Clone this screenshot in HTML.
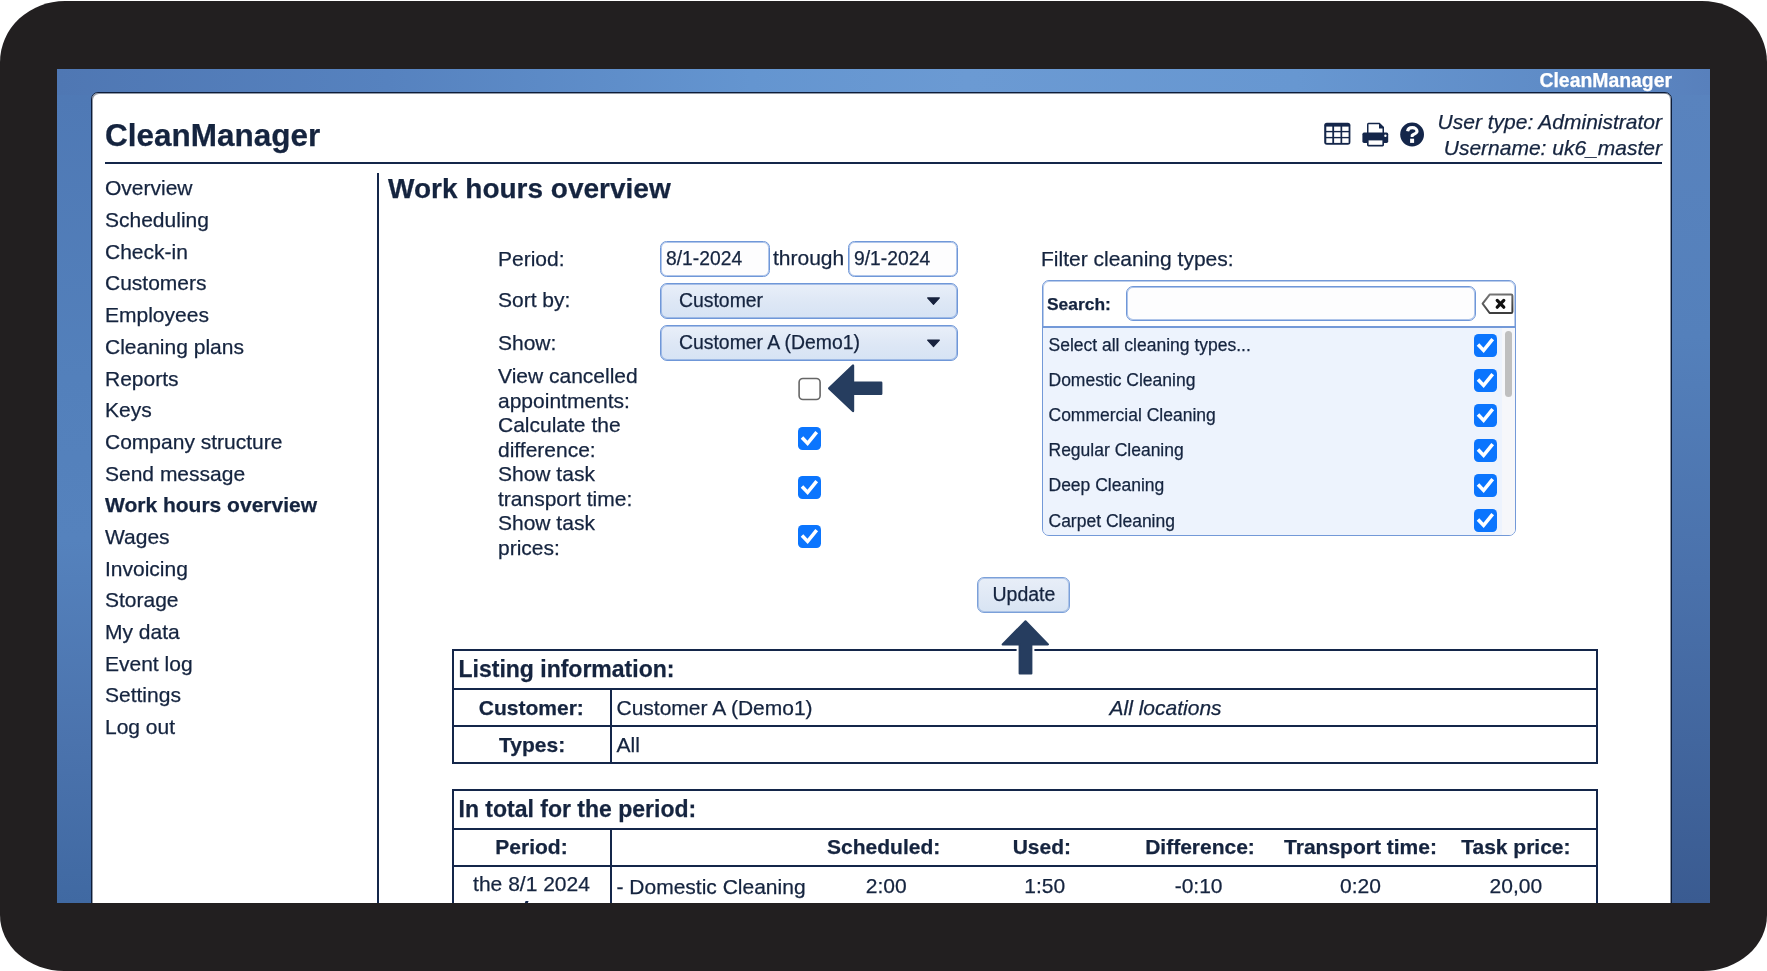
<!DOCTYPE html>
<html><head><meta charset="utf-8">
<style>
html,body{margin:0;padding:0;background:#fff;width:1767px;height:971px;overflow:hidden;position:relative}
*{box-sizing:border-box}
body{font-family:"Liberation Sans",sans-serif;color:#15243f;-webkit-text-stroke-width:0.25px}
.frame{position:absolute;left:0;top:1px;width:1767px;height:969.5px;background:#221f20;border-radius:65px 65px 64px 64px / 61px 61px 56px 56px}
.clip{position:absolute;left:0;top:0;width:1767px;height:903px;overflow:hidden;will-change:transform}
.blue{position:absolute;left:57px;top:69px;width:1653px;height:834px;
 background:radial-gradient(ellipse 820px 260px at 1000px 10px,rgba(108,156,214,1) 0%,rgba(108,156,214,0.6) 50%,rgba(108,156,214,0) 100%),linear-gradient(180deg,#507ab6 0%,#5580bc 45%,#4d74ae 75%,#43669f 100%)}
.t{position:absolute;white-space:nowrap;line-height:1}
.panel{position:absolute;left:91px;top:92px;width:1581px;height:900px;background:#fff;
 border:1px solid #0d1c38;border-radius:7px 7px 0 0;box-shadow:inset 1px 1px 0 rgba(13,28,56,0.45),inset -1px 0 0 rgba(13,28,56,0.45)}
.a{position:absolute}
.b{font-weight:bold}
.i{font-style:italic}
.menu{position:absolute;left:105px;top:172.4px;font-size:21px;line-height:31.68px}
.menu div{white-space:nowrap}
.lbl{position:absolute;left:498px;font-size:21px;line-height:24.5px;white-space:nowrap}

.inp{position:absolute;border:1px solid #6f97d8;border-radius:6.5px;background:#fdfdfe;box-shadow:inset 0 0 0 1px rgba(111,151,216,0.55)}
.sel{position:absolute;border:1px solid #6f97d8;border-radius:7px;box-shadow:inset 0 0 0 1px rgba(111,151,216,0.55);background:linear-gradient(180deg,#e9eff9 0%,#dde7f5 55%,#d6e3f4 100%)}
.dd{position:absolute;width:0;height:0;border-left:6.5px solid transparent;border-right:6.5px solid transparent;border-top:7.6px solid #1c2b45}
.cb{position:absolute;width:23px;height:23px;border-radius:4.5px;background:#0b75fe}
.cb svg{position:absolute;left:0;top:0}
.cbu{position:absolute;width:22.5px;height:22.5px;border-radius:4.5px;background:#fff;border:1.7px solid #666}
.tbl{position:absolute;border:2px solid #14264a}
.hl{position:absolute;height:2px;background:#14264a}
.vl{position:absolute;width:2px;background:#14264a}
</style></head>
<body>
<div class="frame"></div>
<div class="clip">
  <div class="blue"></div>
  <div class="a" style="left:57px;top:69px;width:1653px;height:26px;background:linear-gradient(90deg,#4f77b3 0%,#5682bf 20%,#6495d0 42%,#6b9ad3 55%,#6797d1 75%,#5f8cc7 90%,#5880bc 100%)"></div>
  <div class="a" style="left:57px;top:95px;width:36px;height:808px;background:linear-gradient(180deg,#4f79b5 0%,#5380bb 35%,#5582bd 55%,#4b73ad 80%,#4069a2 100%)"></div>
  <div class="a" style="left:1668px;top:95px;width:42px;height:808px;background:linear-gradient(180deg,#5983be 0%,#5480bb 30%,#4a71ab 60%,#3a5b91 100%)"></div>
  <div class="t b" style="right:95px;top:70.5px;font-size:19.4px;color:#fff">CleanManager</div>
  <div class="panel"></div>

  <!-- header -->
  <div class="t b" style="left:105px;top:120px;font-size:31.5px">CleanManager</div>
  <div class="t i" style="right:105px;top:111.4px;font-size:21px">User type: Administrator</div>
  <div class="t i" style="right:105px;top:136.8px;font-size:21px">Username: uk6_master</div>
  <div class="a" style="left:105px;top:162px;width:1557px;height:2px;background:#14264a"></div>

  <!-- menu -->
  <div class="menu">
    <div>Overview</div><div>Scheduling</div><div>Check-in</div><div>Customers</div><div>Employees</div>
    <div>Cleaning plans</div><div>Reports</div><div>Keys</div><div>Company structure</div><div>Send message</div>
    <div class="b">Work hours overview</div><div>Wages</div><div>Invoicing</div><div>Storage</div><div>My data</div>
    <div>Event log</div><div>Settings</div><div>Log out</div>
  </div>
  <div class="a" style="left:377px;top:173px;width:2px;height:800px;background:#14264a"></div>

  <div class="t b" style="left:388px;top:175px;font-size:28px">Work hours overview</div>

  <!-- form labels -->
  <div class="t" style="left:498px;top:248px;font-size:21px">Period:</div>
  <div class="t" style="left:498px;top:289.2px;font-size:21px">Sort by:</div>
  <div class="t" style="left:498px;top:331.7px;font-size:21px">Show:</div>
  <div class="lbl" style="top:364px">View cancelled<br>appointments:</div>
  <div class="lbl" style="top:413px">Calculate the<br>difference:</div>
  <div class="lbl" style="top:462px">Show task<br>transport time:</div>
  <div class="lbl" style="top:511px">Show task<br>prices:</div>

  <div class="t" style="left:1041px;top:248.3px;font-size:21px">Filter cleaning types:</div>

  <!-- inputs -->
  <div class="inp" style="left:660px;top:241px;width:110px;height:35.5px"></div>
  <div class="t" style="left:666px;top:248.6px;font-size:19.3px">8/1-2024</div>
  <div class="t" style="left:773px;top:246.6px;font-size:21px">through</div>
  <div class="inp" style="left:848px;top:241px;width:110px;height:35.5px"></div>
  <div class="t" style="left:854px;top:248.6px;font-size:19.3px">9/1-2024</div>
  <div class="sel" style="left:660px;top:283px;width:298px;height:36px"></div>
  <div class="t" style="left:679px;top:290.5px;font-size:19.4px">Customer</div>
  <svg class="a" style="left:922px;top:292px" width="24" height="18" viewBox="922 292 24 18"><path d="M927.6 297.9 L939.4 297.9 L933.5 304.4 Z" fill="#17223d" stroke="#17223d" stroke-width="1.1" stroke-linejoin="round"/></svg>
  <div class="sel" style="left:660px;top:325.4px;width:298px;height:36px"></div>
  <div class="t" style="left:679px;top:332.6px;font-size:19.4px">Customer A (Demo1)</div>
  <svg class="a" style="left:922px;top:334px" width="24" height="18" viewBox="922 334 24 18"><path d="M927.6 340.1 L939.4 340.1 L933.5 346.6 Z" fill="#17223d" stroke="#17223d" stroke-width="1.1" stroke-linejoin="round"/></svg>

  <!-- checkboxes -->
  <svg class="a" style="left:796px;top:376px" width="27" height="27" viewBox="796 376 27 27"><rect x="799.1" y="378.5" width="21" height="21" rx="3.8" fill="#fff" stroke="#666" stroke-width="1.6"/></svg>
  <div class="cb" style="left:798px;top:427px"><svg width="23" height="23" viewBox="0 0 23 23"><path d="M5.2 11.8 L9.6 16.4 L17.6 6.4" fill="none" stroke="#fff" stroke-width="3.5" stroke-linecap="square" stroke-linejoin="miter"/></svg></div>
  <div class="cb" style="left:798px;top:476px"><svg width="23" height="23" viewBox="0 0 23 23"><path d="M5.2 11.8 L9.6 16.4 L17.6 6.4" fill="none" stroke="#fff" stroke-width="3.5" stroke-linecap="square" stroke-linejoin="miter"/></svg></div>
  <div class="cb" style="left:798px;top:525px"><svg width="23" height="23" viewBox="0 0 23 23"><path d="M5.2 11.8 L9.6 16.4 L17.6 6.4" fill="none" stroke="#fff" stroke-width="3.5" stroke-linecap="square" stroke-linejoin="miter"/></svg></div>


  <!-- filter box -->
  <div class="a" style="left:1042.3px;top:280px;width:474px;height:256px;border:1px solid #7399d8;border-radius:7px;background:#fff;overflow:hidden;box-shadow:inset 0 0 0 1px rgba(115,153,216,0.5)">
    <div class="a" style="left:0;top:45px;width:100%;height:1.5px;background:#7399d8"></div>
    <div class="a" style="left:0;top:46.5px;width:100%;height:220px;background:#edf3fd"></div>
    <div class="a" style="left:459px;top:46.5px;width:15px;height:220px;background:#f6f7fa"></div>
    <div class="a" style="left:461.7px;top:49.5px;width:7px;height:66.5px;border-radius:3.5px;background:#bfbfbf"></div>
  </div>
  <div class="t b" style="left:1047px;top:295.6px;font-size:17.4px">Search:</div>
  <div class="inp" style="left:1125.5px;top:285.8px;width:350.5px;height:35.7px;border-radius:7px"></div>
  <svg class="a" style="left:1478px;top:289px" width="40" height="28" viewBox="1478 289 40 28">
    <defs><linearGradient id="tg" x1="0" y1="0" x2="0.3" y2="1"><stop offset="0" stop-color="#7a7a7a"/><stop offset="1" stop-color="#3e3e3e"/></linearGradient></defs>
    <path d="M1482.6 303.6 L1489.6 294.6 L1511.2 294.6 Q1512.4 294.6 1512.4 295.8 L1512.4 311.8 Q1512.4 313 1511.2 313 L1489.6 313 Z" fill="#fff" stroke="url(#tg)" stroke-width="2" stroke-linejoin="round"/>
    <path d="M1497.2 300.4 L1503.8 307.2 M1503.8 300.4 L1497.2 307.2" stroke="#111" stroke-width="3.2" stroke-linecap="round"/>
  </svg>
  <div class="t" style="left:1048.5px;top:337.0px;font-size:17.5px">Select all cleaning types...</div>
  <div class="cb" style="left:1474px;top:333.8px"><svg width="23" height="23" viewBox="0 0 23 23"><path d="M5.2 11.8 L9.6 16.4 L17.6 6.4" fill="none" stroke="#fff" stroke-width="3.5" stroke-linecap="square" stroke-linejoin="miter"/></svg></div>
  <div class="t" style="left:1048.5px;top:372.1px;font-size:17.5px">Domestic Cleaning</div>
  <div class="cb" style="left:1474px;top:368.9px"><svg width="23" height="23" viewBox="0 0 23 23"><path d="M5.2 11.8 L9.6 16.4 L17.6 6.4" fill="none" stroke="#fff" stroke-width="3.5" stroke-linecap="square" stroke-linejoin="miter"/></svg></div>
  <div class="t" style="left:1048.5px;top:407.2px;font-size:17.5px">Commercial Cleaning</div>
  <div class="cb" style="left:1474px;top:404.0px"><svg width="23" height="23" viewBox="0 0 23 23"><path d="M5.2 11.8 L9.6 16.4 L17.6 6.4" fill="none" stroke="#fff" stroke-width="3.5" stroke-linecap="square" stroke-linejoin="miter"/></svg></div>
  <div class="t" style="left:1048.5px;top:442.3px;font-size:17.5px">Regular Cleaning</div>
  <div class="cb" style="left:1474px;top:439.1px"><svg width="23" height="23" viewBox="0 0 23 23"><path d="M5.2 11.8 L9.6 16.4 L17.6 6.4" fill="none" stroke="#fff" stroke-width="3.5" stroke-linecap="square" stroke-linejoin="miter"/></svg></div>
  <div class="t" style="left:1048.5px;top:477.4px;font-size:17.5px">Deep Cleaning</div>
  <div class="cb" style="left:1474px;top:474.2px"><svg width="23" height="23" viewBox="0 0 23 23"><path d="M5.2 11.8 L9.6 16.4 L17.6 6.4" fill="none" stroke="#fff" stroke-width="3.5" stroke-linecap="square" stroke-linejoin="miter"/></svg></div>
  <div class="t" style="left:1048.5px;top:512.5px;font-size:17.5px">Carpet Cleaning</div>
  <div class="cb" style="left:1474px;top:509.3px"><svg width="23" height="23" viewBox="0 0 23 23"><path d="M5.2 11.8 L9.6 16.4 L17.6 6.4" fill="none" stroke="#fff" stroke-width="3.5" stroke-linecap="square" stroke-linejoin="miter"/></svg></div>

  <!-- update button -->
  <div class="a" style="left:977px;top:577px;width:93px;height:36.3px;border:1px solid #7ba0d9;border-radius:7px;background:linear-gradient(180deg,#e8eef8,#d8e4f3);box-shadow:inset 0 0 0 1px rgba(123,160,217,0.5)"></div>
  <div class="t" style="left:992.5px;top:585.4px;font-size:19.5px">Update</div>

  <!-- listing table -->
  <div class="tbl" style="left:452px;top:649px;width:1146px;height:115px"></div>
  <div class="hl" style="left:452px;top:688px;width:1146px"></div>
  <div class="hl" style="left:452px;top:725px;width:1146px"></div>
  <div class="vl" style="left:609.8px;top:688px;height:76px"></div>
  <div class="t b" style="left:458.5px;top:658.3px;font-size:23px">Listing information:</div>
  <div class="t b" style="left:478.8px;top:696.5px;font-size:21px">Customer:</div>
  <div class="t" style="left:616.5px;top:696.5px;font-size:21px">Customer A (Demo1)</div>
  <div class="t i" style="left:1109.5px;top:696.5px;font-size:21px">All locations</div>
  <div class="t b" style="left:499px;top:733.5px;font-size:21px">Types:</div>
  <div class="t" style="left:616.5px;top:733.5px;font-size:21px">All</div>

  <!-- up arrow -->
  <svg class="a" style="left:995px;top:614px" width="62" height="66" viewBox="995 614 62 66">
    <path d="M1025.5 621.2 L1048 644.4 L1031.4 644.4 L1031.4 673.6 L1019.6 673.6 L1019.6 644.4 L1002.6 644.4 Z" fill="#263d5f" stroke="#fff" stroke-width="6" stroke-linejoin="round"/>
    <path d="M1025.5 621.2 L1048 644.4 L1031.4 644.4 L1031.4 673.6 L1019.6 673.6 L1019.6 644.4 L1002.6 644.4 Z" fill="#263d5f" stroke="#263d5f" stroke-width="2" stroke-linejoin="round"/>
  </svg>

  <!-- totals table -->
  <div class="tbl" style="left:452px;top:789px;width:1146px;height:200px"></div>
  <div class="hl" style="left:452px;top:828px;width:1146px"></div>
  <div class="hl" style="left:452px;top:864.5px;width:1146px"></div>
  <div class="vl" style="left:609.8px;top:828px;height:100px"></div>
  <div class="t b" style="left:458.5px;top:797.7px;font-size:23px">In total for the period:</div>
  <div class="t b" style="left:452px;width:159px;text-align:center;top:836px;font-size:21px">Period:</div>
  <div class="t b" style="left:783.7px;width:200px;text-align:center;top:835.6px;font-size:21px">Scheduled:</div>
  <div class="t b" style="left:941.9px;width:200px;text-align:center;top:835.6px;font-size:21px">Used:</div>
  <div class="t b" style="left:1100px;width:200px;text-align:center;top:835.6px;font-size:21px">Difference:</div>
  <div class="t b" style="left:1260.5px;width:200px;text-align:center;top:835.6px;font-size:21px">Transport time:</div>
  <div class="t b" style="left:1415.9px;width:200px;text-align:center;top:835.6px;font-size:21px">Task price:</div>
  <div class="t" style="left:452px;width:159px;text-align:center;top:873px;font-size:21px">the 8/1 2024</div>
  <div class="a" style="left:524.5px;top:900.5px;width:3px;height:3px;background:#14264a;transform:skewX(-20deg)"></div>
  <div class="t" style="left:616.5px;top:875.7px;font-size:21px">- Domestic Cleaning</div>
  <div class="t" style="left:786.3px;width:200px;text-align:center;top:875.2px;font-size:21px">2:00</div>
  <div class="t" style="left:944.8px;width:200px;text-align:center;top:875.2px;font-size:21px">1:50</div>
  <div class="t" style="left:1098.6px;width:200px;text-align:center;top:875.2px;font-size:21px">-0:10</div>
  <div class="t" style="left:1260.5px;width:200px;text-align:center;top:875.2px;font-size:21px">0:20</div>
  <div class="t" style="left:1415.9px;width:200px;text-align:center;top:875.2px;font-size:21px">20,00</div>

  <!-- icons -->
  <svg class="a" style="left:1320px;top:118px" width="110" height="32" viewBox="1320 118 110 32">
    <rect x="1324.2" y="122.7" width="26.2" height="22" rx="2.6" fill="#14264a"/>
    <g fill="#fff">
      <rect x="1326.3" y="126.6" width="6" height="4.3"/><rect x="1334.1" y="126.6" width="6.4" height="4.3"/><rect x="1342.2" y="126.6" width="6.4" height="4.3"/>
      <rect x="1326.3" y="132.3" width="6" height="4.6"/><rect x="1334.1" y="132.3" width="6.4" height="4.6"/><rect x="1342.2" y="132.3" width="6.4" height="4.6"/>
      <rect x="1326.3" y="138.3" width="6" height="4.6"/><rect x="1334.1" y="138.3" width="6.4" height="4.6"/><rect x="1342.2" y="138.3" width="6.4" height="4.6"/>
    </g>
    <!-- printer -->
    <path d="M1367 124.2 Q1367 122.7 1368.5 122.7 L1379.6 122.7 L1384 127.1 L1384 134 L1367 134 Z" fill="#14264a"/>
    <path d="M1368.5 124.2 L1379 124.2 L1379 128.6 L1382.5 128.6 L1382.5 134.6 L1368.5 134.6 Z" fill="#fff"/>
    <rect x="1362.4" y="132.6" width="25.8" height="10.3" rx="1.6" fill="#14264a"/>
    <rect x="1367" y="138.8" width="17" height="7.6" rx="1.4" fill="#14264a"/>
    <rect x="1368.6" y="140.4" width="13.8" height="4.4" fill="#fff"/>
    <circle cx="1385.4" cy="135.8" r="1.2" fill="#fff"/>
    <!-- help -->
    <circle cx="1412.1" cy="134.5" r="11.9" fill="#14264a"/>
    <path d="M1407.6 131.2 C1407.9 128.9 1409.6 127.6 1412.3 127.6 C1415 127.6 1417 129.1 1417 131.3 C1417 133.7 1413.6 134 1412.2 135.4 L1412.2 137" fill="none" stroke="#fff" stroke-width="3.1" stroke-linecap="butt" stroke-linejoin="round"/>
    <rect x="1410.1" y="138.7" width="4" height="4.2" fill="#fff"/>
  </svg>

  <!-- left arrow -->
  <svg class="a" style="left:820px;top:358px" width="70" height="62" viewBox="820 358 70 62">
    <path d="M829.2 388.3 L853 365.6 L853 382.8 L881.2 382.8 L881.2 393.8 L853 393.8 L853 411 Z" fill="#263d5f" stroke="#263d5f" stroke-width="2.4" stroke-linejoin="round"/>
  </svg>
</div>
</body></html>
